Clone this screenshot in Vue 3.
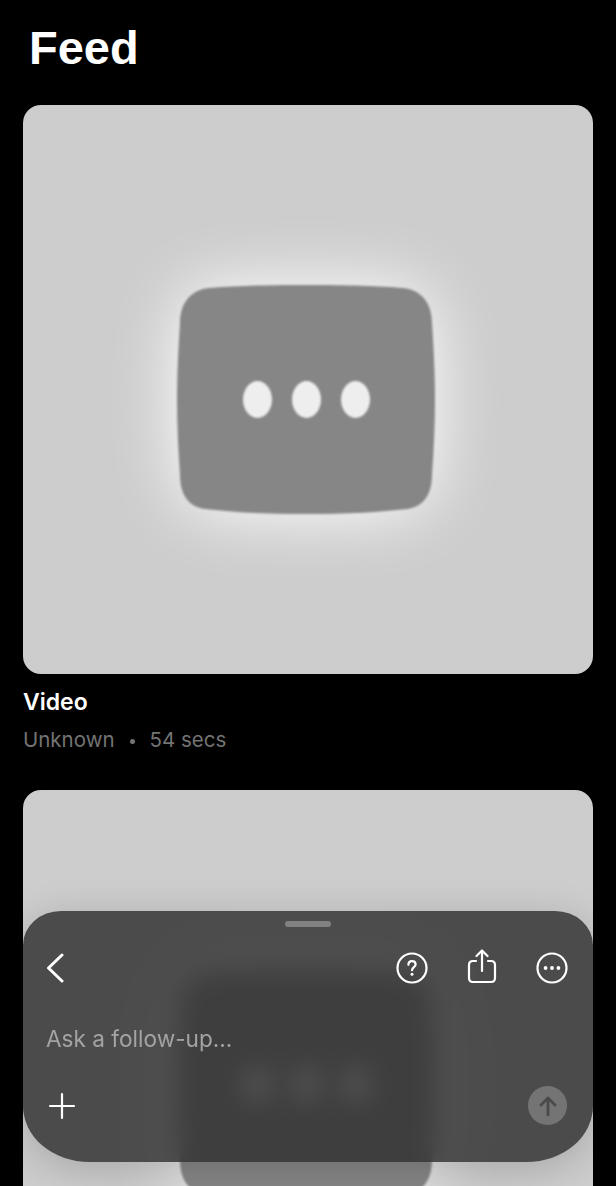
<template>
  <div class="screen">
    <h1 class="title">Feed</h1>

    <div v-for="item in feed" :key="item.id" class="feed-item">
      <div class="thumb">
        <div class="placeholder">
          <svg class="placeholder-shape" width="258" height="232" viewBox="0 0 258 232">
            <path d="M129 2 C170 2 205 3 226 5 C246 7 255 22 255 40 C257 70 258 95 258 116 C258 140 257 165 255 192 C255 212 246 224 230 226 C205 229 170 231 129 231 C88 231 53 229 28 226 C12 224 3 212 3 192 C1 165 0 140 0 116 C0 95 1 70 3 40 C3 22 12 7 32 5 C53 3 88 2 129 2 Z" />
          </svg>
          <span class="dot"></span>
          <span class="dot"></span>
          <span class="dot"></span>
        </div>
      </div>
      <template v-if="item.title">
        <div class="item-title">{{ item.title }}</div>
        <div class="item-meta">
          <span>{{ item.source }}</span>
          <span class="sep"></span>
          <span>{{ item.length }}</span>
        </div>
      </template>
    </div>

    <div class="sheet">
      <div class="handle"></div>
      <div class="toolbar">
        <svg class="icon back" width="20" height="30" viewBox="0 0 20 30">
          <path d="M17 2 L3.5 15 L17 28" />
        </svg>
        <div class="actions">
          <svg class="icon" width="32" height="32" viewBox="0 0 32 32">
            <circle cx="16" cy="16" r="14.5" />
            <path d="M12.4 12.8 C12.4 10.4 14 9.2 16 9.2 C18.1 9.2 19.6 10.5 19.6 12.4 C19.6 15 16 15.2 16 18.2" />
            <circle class="fill" cx="16" cy="22.2" r="1.5" />
          </svg>
          <svg class="icon" width="30" height="35" viewBox="0 0 30 35">
            <path d="M9 12 H6 Q2 12 2 16 V29 Q2 33 6 33 H24 Q28 33 28 29 V16 Q28 12 24 12 H21" />
            <path d="M15 22 V2 M9.5 7 L15 1.5 L20.5 7" />
          </svg>
          <svg class="icon" width="32" height="32" viewBox="0 0 32 32">
            <circle cx="16" cy="16" r="14.5" />
            <circle class="fill" cx="9.6" cy="16" r="1.9" />
            <circle class="fill" cx="16" cy="16" r="1.9" />
            <circle class="fill" cx="22.4" cy="16" r="1.9" />
          </svg>
        </div>
      </div>
      <div class="prompt">Ask a follow-up...</div>
      <div class="composer">
        <svg class="icon" width="28" height="28" viewBox="0 0 28 28">
          <path d="M14 2 V26 M2 14 H26" />
        </svg>
        <button class="send">
          <svg width="20" height="22" viewBox="0 0 20 22">
            <path d="M10 20 V3 M3 10 L10 3 L17 10" />
          </svg>
        </button>
      </div>
    </div>
  </div>
</template>

<script setup>
// the second card runs off the bottom of the screen, its text is never seen
const feed = [
  { id: 1, title: 'Video', source: 'Unknown', length: '54 secs' },
  { id: 2 },
]
</script>

<style>
html,
body {
  background: #000;
}
</style>

<style scoped>
.screen {
  position: relative;
  width: 616px;
  height: 1186px;
  overflow: hidden;
  background: #000;
  padding: 0 23px;
  box-sizing: border-box;
}

.title {
  margin: 0;
  padding: 21px 0 0 6px;
  height: 105px;
  box-sizing: border-box;
  font-family: 'Liberation Sans', Arial, sans-serif;
  font-size: 47px;
  line-height: 53px;
  font-weight: 700;
  color: #fff;
}

.feed-item {
  margin-bottom: 36px;
}

.thumb {
  height: 569px;
  border-radius: 18px;
  overflow: hidden;
  background: #cdcdcd;
  display: flex;
  align-items: center;
  justify-content: center;
  padding: 19px 4px 0 0;
  box-sizing: border-box;
}

.placeholder {
  position: relative;
  width: 258px;
  height: 232px;
  display: flex;
  align-items: center;
  justify-content: center;
  gap: 20px;
  filter: blur(1px);
}

.placeholder-shape {
  position: absolute;
  left: 0;
  top: 0;
  overflow: visible;
  filter: drop-shadow(0 0 34px #fff);
}

.placeholder-shape path {
  fill: #868686;
}

.dot {
  position: relative;
  width: 29px;
  height: 37px;
  border-radius: 50%;
  background: #eeeeee;
}

.item-title {
  margin-top: 14px;
  font-family: Inter, sans-serif;
  font-size: 23px;
  line-height: 28px;
  font-weight: 600;
  color: #fff;
}

.item-meta {
  margin-top: 10px;
  display: flex;
  align-items: center;
  font-family: Inter, sans-serif;
  font-size: 20.5px;
  line-height: 28px;
  color: #737373;
}

.sep {
  width: 5px;
  height: 5px;
  border-radius: 50%;
  background: #737373;
  margin: 2px 15px 0;
}

.sheet {
  position: absolute;
  left: 23px;
  top: 911px;
  width: 570px;
  height: 251px;
  box-sizing: border-box;
  padding: 10px 23px 0;
  border-radius: 38px 38px 66px 66px / 34px 34px 56px 56px;
  background: rgba(46, 46, 46, 0.82);
  backdrop-filter: blur(12px);
  box-shadow: 0 8px 40px rgba(0, 0, 0, 0.18);
  display: flex;
  flex-direction: column;
}

.handle {
  width: 46px;
  height: 6px;
  border-radius: 3px;
  background: #818181;
  align-self: center;
}

.toolbar {
  margin-top: 21px;
  height: 36px;
  display: flex;
  align-items: center;
  justify-content: space-between;
}

.back {
  margin-top: 3px;
  margin-left: -1px;
}

.actions {
  display: flex;
  align-items: flex-end;
  gap: 39px;
  margin-right: 2px;
}

.icon {
  display: block;
  flex: none;
}

.icon path,
.icon circle {
  fill: none;
  stroke: #fff;
  stroke-width: 2.2;
  stroke-linecap: round;
  stroke-linejoin: round;
}

.icon .fill {
  fill: #fff;
  stroke: none;
}

.back path {
  stroke-width: 3;
}

.prompt {
  margin-top: 40px;
  font-family: Inter, sans-serif;
  font-size: 22.6px;
  line-height: 30px;
  color: #a3a3a3;
}

.composer {
  margin-top: 32px;
  display: flex;
  align-items: center;
  justify-content: space-between;
  padding-left: 2px;
}

.send {
  width: 39px;
  height: 39px;
  padding: 0;
  border: none;
  border-radius: 50%;
  background: #747474;
  display: flex;
  align-items: center;
  justify-content: center;
  margin-right: 3px;
}

.send path {
  fill: none;
  stroke: #4a4a4a;
  stroke-width: 2.8;
  stroke-linecap: round;
  stroke-linejoin: round;
}
</style>
